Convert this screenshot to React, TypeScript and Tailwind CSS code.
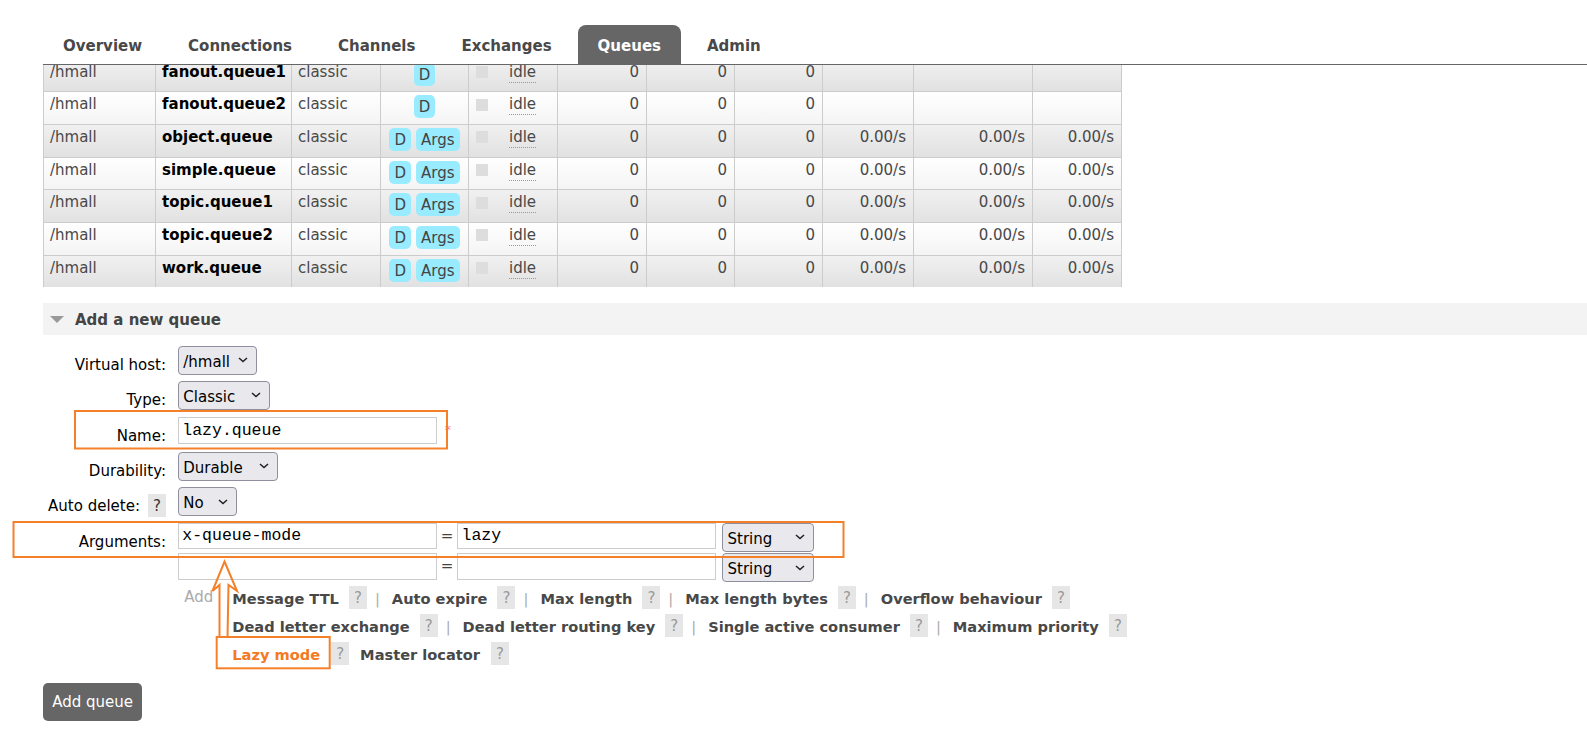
import React from "react";

type QueueRow = { name: string; args: boolean; rates: boolean };

const queues: QueueRow[] = [
  { name: "fanout.queue1", args: false, rates: false },
  { name: "fanout.queue2", args: false, rates: false },
  { name: "object.queue", args: true, rates: true },
  { name: "simple.queue", args: true, rates: true },
  { name: "topic.queue1", args: true, rates: true },
  { name: "topic.queue2", args: true, rates: true },
  { name: "work.queue", args: true, rates: true },
];

const cols = [
  "w-[112px]",
  "w-[136px]",
  "w-[89px]",
  "w-[88px]",
  "w-[89px]",
  "w-[89px]",
  "w-[88px]",
  "w-[88px]",
  "w-[91px]",
  "w-[119px]",
  "w-[89px]",
];

const tabs = ["Overview", "Connections", "Channels", "Exchanges", "Queues", "Admin"];

const cell = "border border-[#ccc] px-[6px] pt-[2px] align-top";
const numCell = "border border-[#ccc] pr-[7px] pt-[2px] align-top text-right";

const Badge = ({ children }: { children: React.ReactNode }) => (
  <span className="flex h-[23px] items-center rounded-[5px] bg-[#99ebff] px-[5px] pt-[1px] text-[#444]">
    {children}
  </span>
);

const Help = ({ dark, className = "" }: { dark?: boolean; className?: string }) => (
  <span
    className={`flex h-[23px] w-[18px] shrink-0 items-center justify-center bg-[#e6e6e6] text-[15px] ${
      dark ? "text-[#333]" : "text-[#999]"
    } ${className}`}
  >
    ?
  </span>
);

const Chevron = () => (
  <svg width="10" height="6" viewBox="0 0 10 6" className="shrink-0">
    <path d="M1 1l4 3.6L9 1" stroke="#222" strokeWidth="1.5" fill="none" />
  </svg>
);

const Select = ({ value, w, className = "" }: { value: string; w: string; className?: string }) => (
  <div
    className={`${w} flex h-[29px] shrink-0 items-center justify-between rounded-[4px] border border-[#8f8f9d] bg-[#e9e9ed] pl-[4px] pr-[8px] pt-[3px] text-black ${className}`}
  >
    <span className="leading-[20px]">{value}</span>
    <span className="-mt-[3px]">
      <Chevron />
    </span>
  </div>
);

const TextBox = ({ value }: { value: string }) => (
  <input
    readOnly
    value={value}
    className="h-[26.6px] w-[258.5px] shrink-0 border border-[#ccc] bg-white px-[3px] font-['Liberation_Mono',monospace] text-[16.5px] text-black outline-none"
  />
);

const Label = ({ children }: { children: React.ReactNode }) => (
  <div className="flex w-[166px] shrink-0 items-start justify-end text-black">{children}</div>
);

const LinkRow = ({ items }: { items: string[] }) => (
  <div className="flex h-[28px] items-center text-[14.6px]">
    {items.map((t, i) => (
      <React.Fragment key={t}>
        {i > 0 && <span className="ml-[8px] mr-[12px] pt-[3px] text-[#aaa]">|</span>}
        <span className="pt-[3px] font-bold text-[#484848]">{t}</span>
        <Help className="ml-[10px]" />
      </React.Fragment>
    ))}
  </div>
);

export default function App() {
  return (
    <div className="relative min-h-[738px] w-full overflow-hidden bg-white font-['DejaVu_Sans',sans-serif] text-[15px] leading-[20px]">
      {/* tabs */}
      <div className="flex h-[65px] items-end pl-[43px]">
        <div className="flex flex-1 items-end gap-[6px] border-b border-[#666]">
          {tabs.map((t) => (
            <div
              key={t}
              className={`h-[39px] rounded-t-[8px] px-[20px] pt-[11px] font-bold ${
                t === "Queues" ? "bg-[#666] text-white" : "text-[#484848]"
              }`}
            >
              {t}
            </div>
          ))}
        </div>
      </div>

      {/* queue table, scrolled under the header */}
      <div className="h-[222.4px] overflow-hidden pl-[43px]">
        <table className="-mt-[6.5px] w-[1078px] table-fixed border-collapse text-[#484848]">
          <colgroup>
            {cols.map((c, i) => (
              <col key={i} className={c} />
            ))}
          </colgroup>
          <tbody>
            {queues.map((q, i) => (
              <tr
                key={q.name}
                className={`h-[32.7px] ${
                  i % 2 === 0
                    ? "bg-linear-to-b from-[#f1f1f1] to-[#e1e1e1]"
                    : "bg-linear-to-b from-white to-[#f4f4f4]"
                }`}
              >
                <td className={cell}>/hmall</td>
                <td className={`${cell} font-bold text-black`}>{q.name}</td>
                <td className={cell}>classic</td>
                <td className="border border-[#ccc] pt-[3px] align-top">
                  <div className="flex justify-center gap-[5px]">
                    <Badge>D</Badge>
                    {q.args && <Badge>Args</Badge>}
                  </div>
                </td>
                <td className="border border-[#ccc] pl-[7px] pt-[2px] align-top">
                  <div className="flex items-center">
                    <span className="h-[12px] w-[12px] bg-[#ddd]" />
                    <span className="ml-[21px] border-b border-dotted border-[#999]">idle</span>
                  </div>
                </td>
                <td className={numCell}>0</td>
                <td className={numCell}>0</td>
                <td className={numCell}>0</td>
                <td className={numCell}>{q.rates ? "0.00/s" : ""}</td>
                <td className={numCell}>{q.rates ? "0.00/s" : ""}</td>
                <td className={numCell}>{q.rates ? "0.00/s" : ""}</td>
              </tr>
            ))}
          </tbody>
        </table>
      </div>

      {/* section */}
      <div className="ml-[43px] mt-[15.3px] flex h-[32.3px] items-center bg-[#f3f3f3]">
        <svg className="ml-[7px] mt-[2px]" width="14" height="7" viewBox="0 0 14 7">
          <path d="M0 0h14L7 7z" fill="#999" />
        </svg>
        <span className="ml-[11px] pt-[2px] font-bold text-[#444]">Add a new queue</span>
      </div>

      <div className="pt-[10.7px]">
        <div className="flex h-[35px] items-start">
          <Label>
            <span className="pt-[9px]">Virtual host:</span>
          </Label>
          <Select value="/hmall" w="w-[79px]" className="ml-[12.3px]" />
        </div>
        <div className="flex h-[36.6px] items-start">
          <Label>
            <span className="pt-[9px]">Type:</span>
          </Label>
          <Select value="Classic" w="w-[92px]" className="ml-[12.3px]" />
        </div>
        <div className="flex h-[34.4px] items-start">
          <Label>
            <span className="pt-[9px]">Name:</span>
          </Label>
          <div className="ml-[12.3px] flex items-start">
            <TextBox value="lazy.queue" />
            <span className="ml-[8px] mt-[7px] text-[12px] leading-none text-[#f77]">*</span>
          </div>
        </div>
        <div className="flex h-[35.6px] items-start">
          <Label>
            <span className="pt-[9px]">Durability:</span>
          </Label>
          <Select value="Durable" w="w-[100px]" className="ml-[12.3px]" />
        </div>
        <div className="flex h-[35.4px] items-start">
          <Label>
            <span className="pt-[9px]">Auto delete:</span>
            <Help dark className="ml-[8px] mt-[7px]" />
          </Label>
          <Select value="No" w="w-[58.4px]" className="ml-[12.3px]" />
        </div>
        <div className="flex items-start">
          <Label>
            <span className="pt-[9px]">Arguments:</span>
          </Label>
          <div className="ml-[12.3px] flex flex-col">
            <div className="flex h-[30.6px] items-start">
              <TextBox value="x-queue-mode" />
              <span className="w-[20.7px] pt-[3px] text-center text-[#444]">=</span>
              <TextBox value="lazy" />
              <Select value="String" w="w-[92px]" className="ml-[6.5px]" />
            </div>
            <div className="flex h-[30.6px] items-start">
              <TextBox value="" />
              <span className="w-[20.7px] pt-[3px] text-center text-[#444]">=</span>
              <TextBox value="" />
              <Select value="String" w="w-[92px]" className="ml-[6.5px]" />
            </div>
            <div className="flex">
              <div className="w-[54px] shrink-0 pl-[6px] pt-[3px] text-[#aaa]">Add</div>
              <div className="flex flex-col">
                <LinkRow
                  items={["Message TTL", "Auto expire", "Max length", "Max length bytes", "Overflow behaviour"]}
                />
                <LinkRow
                  items={[
                    "Dead letter exchange",
                    "Dead letter routing key",
                    "Single active consumer",
                    "Maximum priority",
                  ]}
                />
                <div className="flex h-[28px] items-center text-[14.6px]">
                  <span className="pt-[3px] font-bold text-[#f37a22]">Lazy mode</span>
                  <Help className="ml-[11px]" />
                  <span className="ml-[11px] pt-[3px] font-bold text-[#484848]">Master locator</span>
                  <Help className="ml-[11px]" />
                </div>
              </div>
            </div>
          </div>
        </div>
        <button className="ml-[43px] mt-[15px] h-[38px] w-[99.4px] rounded-[5px] bg-[#666] text-white">
          Add queue
        </button>
      </div>

      {/* screenshot annotations */}
      <svg
        className="pointer-events-none absolute left-0 top-0"
        width="1587"
        height="738"
        viewBox="0 0 1587 738"
        fill="none"
        stroke="#f5802a"
        strokeWidth="2"
      >
        <rect x="75" y="411" width="372" height="37.5" />
        <rect x="13.5" y="522" width="830" height="35" />
        <rect x="216.7" y="637" width="113" height="31.3" />
        <polygon
          points="224.5,561.5 237,591 228.5,585 227.5,637 219.5,637 219.5,585 212.5,591"
          strokeLinejoin="miter"
        />
      </svg>
    </div>
  );
}
